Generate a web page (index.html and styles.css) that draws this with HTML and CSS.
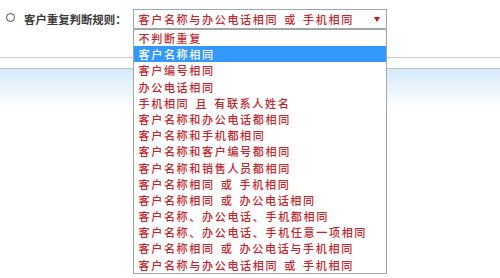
FILE: index.html
```html
<!DOCTYPE html>
<html lang="zh-CN">
<head>
<meta charset="utf-8">
<title>客户重复判断规则</title>
<link rel="stylesheet" href="styles.css">
</head>
<body>
<div class="page">
  <div class="rule-row">
    <span class="radio"></span>
    <span class="rule-label">客户重复判断规则：</span>
    <div class="select-wrap">
      <div class="select-box">
        <span class="select-value">客户名称与办公电话相同 或 手机相同</span>
        <span class="select-arrow"></span>
      </div>
      <ul class="select-list">
        <li>不判断重复</li>
        <li class="selected">客户名称相同</li>
        <li>客户编号相同</li>
        <li>办公电话相同</li>
        <li>手机相同 且 有联系人姓名</li>
        <li>客户名称和办公电话都相同</li>
        <li>客户名称和手机都相同</li>
        <li>客户名称和客户编号都相同</li>
        <li>客户名称和销售人员都相同</li>
        <li>客户名称相同 或 手机相同</li>
        <li>客户名称相同 或 办公电话相同</li>
        <li>客户名称、办公电话、手机都相同</li>
        <li>客户名称、办公电话、手机任意一项相同</li>
        <li>客户名称相同 或 办公电话与手机相同</li>
        <li>客户名称与办公电话相同 或 手机相同</li>
      </ul>
    </div>
  </div>
  <div class="band"></div>
  <div class="gradient"></div>
</div>
</body>
</html>
```

FILE: styles.css
```css
html, body {
  margin: 0;
  padding: 0;
  background: #ffffff;
}

body {
  font-family: "Noto Sans CJK SC", "Noto Sans", sans-serif;
  width: 500px;
  height: 278px;
  overflow: hidden;
}

.page {
  display: flex;
  flex-direction: column;
}

.rule-row {
  display: flex;
  align-items: center;
  padding-top: 9px;
  height: 20px;
}

.radio {
  box-sizing: border-box;
  width: 9px;
  height: 9px;
  margin-left: 6px;
  margin-top: -3px;
  border: 1.5px solid #4a4a4a;
  border-radius: 50%;
}

.rule-label {
  margin-left: 9px;
  font-size: 11.4px;
  font-weight: bold;
  color: #3a3a3a;
  line-height: 20px;
}

.select-wrap {
  position: relative;
  margin-left: 6px;
}

.select-box {
  box-sizing: border-box;
  width: 254px;
  height: 20px;
  border: 1px solid #9ea6b0;
  display: flex;
  align-items: center;
  justify-content: space-between;
  padding: 0 6px 0 5px;
  background: #fff;
}

.select-value,
.select-list li {
  font-size: 11.1px;
  font-weight: 500;
  letter-spacing: 1.6px;
  color: #c4262e;
  word-spacing: 2px;
  white-space: nowrap;
}

.select-value {
  line-height: 18px;
}

.select-arrow {
  width: 0;
  height: 0;
  border-left: 3px solid transparent;
  border-right: 3px solid transparent;
  border-top: 5px solid #c4161c;
}

.select-list {
  position: absolute;
  left: 0;
  top: 20px;
  box-sizing: border-box;
  width: 254px;
  margin: 0;
  padding: 0;
  list-style: none;
  background: #fff;
  border: 1px solid #a5a5a5;
  z-index: 2;
}

.select-list li {
  height: 16.2px;
  line-height: 16.2px;
  padding-left: 5px;
}

.select-list li.selected {
  background: #3399ff;
  color: #ffffff;
}

.band {
  margin-top: 28px;
  height: 10px;
  border-top: 1px solid #c8c8c8;
  border-bottom: 1px solid #b9c3cc;
}

.gradient {
  height: 40px;
  background: linear-gradient(to bottom, #d5e9fa, #ffffff);
}
```
